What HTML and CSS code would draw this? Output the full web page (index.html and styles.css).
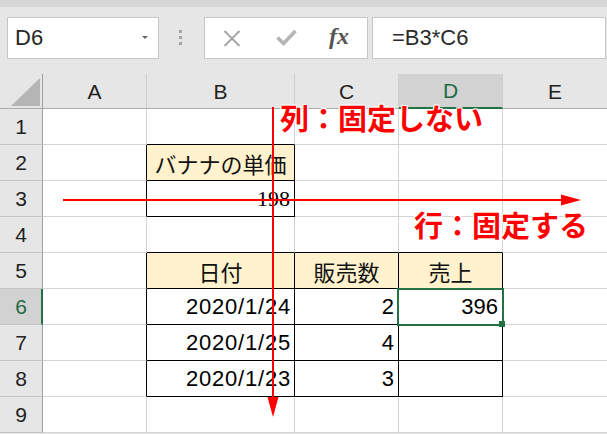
FILE: index.html
```html
<!DOCTYPE html>
<html lang="ja">
<head>
<meta charset="utf-8">
<title>Excel</title>
<link rel="stylesheet" href="styles.css">
</head>
<body>
<div class="app">
  <div class="topband"></div>
  <div class="toolbar">
    <div class="namebox"><span class="name">D6</span><span class="caret"></span></div>
    <div class="grip"><i></i><i></i><i></i></div>
    <div class="fbtns">
      <svg class="ico-x" width="18" height="17" viewBox="0 0 18 17"><path d="M1.5 1 L16.5 16 M16.5 1 L1.5 16" stroke="#a6a6a6" stroke-width="2" fill="none"/></svg>
      <svg class="ico-check" width="21" height="17" viewBox="0 0 21 17"><path d="M1.5 8.5 L7.5 14.5 L19.5 2" stroke="#b5b5b5" stroke-width="3.6" fill="none"/></svg>
      <span class="fx">fx</span>
    </div>
    <div class="formula">=B3*C6</div>
  </div>
  <div class="sheet">
    <div class="corner"><span class="tri"></span></div>
    <div class="ch">A</div>
    <div class="ch">B</div>
    <div class="ch">C</div>
    <div class="ch sel">D</div>
    <div class="ch">E</div>

    <div class="rh">1</div>
    <div class="c"></div>
    <div class="c tb"></div>
    <div class="c"></div>
    <div class="c"></div>
    <div class="c"></div>

    <div class="rh">2</div>
    <div class="c tr"></div>
    <div class="c t hd">バナナの単価</div>
    <div class="c"></div>
    <div class="c"></div>
    <div class="c"></div>

    <div class="rh">3</div>
    <div class="c tr"></div>
    <div class="c t num serif">198</div>
    <div class="c"></div>
    <div class="c"></div>
    <div class="c"></div>

    <div class="rh">4</div>
    <div class="c"></div>
    <div class="c tb"></div>
    <div class="c tb"></div>
    <div class="c tb"></div>
    <div class="c"></div>

    <div class="rh">5</div>
    <div class="c tr"></div>
    <div class="c t hd">日付</div>
    <div class="c t hd">販売数</div>
    <div class="c t hd">売上</div>
    <div class="c"></div>

    <div class="rh sel">6</div>
    <div class="c tr"></div>
    <div class="c t num date">2020/1/24</div>
    <div class="c t num">2</div>
    <div class="c t num active">396</div>
    <div class="c"></div>

    <div class="rh">7</div>
    <div class="c tr"></div>
    <div class="c t num date">2020/1/25</div>
    <div class="c t num">4</div>
    <div class="c t num"></div>
    <div class="c"></div>

    <div class="rh">8</div>
    <div class="c tr"></div>
    <div class="c t num date">2020/1/23</div>
    <div class="c t num">3</div>
    <div class="c t num"></div>
    <div class="c"></div>

    <div class="rh">9</div>
    <div class="c"></div>
    <div class="c"></div>
    <div class="c"></div>
    <div class="c"></div>
    <div class="c"></div>
  </div>

  <svg class="arrows" width="607" height="434" viewBox="0 0 607 434">
    <line x1="273" y1="107" x2="273" y2="400" stroke="#ff0000" stroke-width="2"/>
    <polygon points="267.5,397 278.5,397 273,417" fill="#ff0000"/>
    <line x1="63" y1="200" x2="564" y2="200" stroke="#ff0000" stroke-width="2"/>
    <polygon points="561,194.5 561,205.5 581,200" fill="#ff0000"/>
  </svg>
  <div class="note note-col">列：固定しない</div>
  <div class="note note-row">行：固定する</div>
</div>
</body>
</html>
```

FILE: styles.css
```css
* {
  box-sizing: border-box;
  margin: 0;
  padding: 0;
}

html,
body {
  width: 607px;
  height: 434px;
  overflow: hidden;
}

body {
  font-family: "Liberation Sans", "Noto Sans CJK JP", sans-serif;
  background: #e6e6e6;
  color: #000;
}

.app {
  position: relative;
  width: 607px;
  height: 434px;
  overflow: hidden;
}

.topband {
  height: 7px;
  background: #d6d6d6;
}

.toolbar {
  height: 67px;
  display: flex;
  align-items: flex-start;
  padding: 10px 0 0 7px;
  background: #e6e6e6;
}

.namebox {
  width: 152px;
  height: 42px;
  background: #fff;
  border: 1px solid #c6c6c6;
  display: flex;
  align-items: center;
  padding-left: 7px;
  padding-right: 10px;
}

.name {
  flex: 1;
  font-size: 22px;
  color: #262626;
}

.caret {
  width: 0;
  height: 0;
  border-left: 3px solid transparent;
  border-right: 3px solid transparent;
  border-top: 3px solid #666;
  margin-top: -2px;
}

.grip {
  display: flex;
  flex-direction: column;
  gap: 3px;
  margin: 13px 22px 0 20px;
}

.grip i {
  display: block;
  width: 3px;
  height: 3px;
  background: #a3a3a3;
}

.fbtns {
  width: 164px;
  height: 42px;
  background: #fff;
  border: 1px solid #c6c6c6;
  display: flex;
  align-items: center;
  padding-left: 18px;
}

.ico-x {
  display: block;
}

.ico-check {
  display: block;
  margin-left: 35px;
  margin-top: -1px;
}

.fx {
  margin-left: 32px;
  font-family: "Liberation Serif", serif;
  font-style: italic;
  font-weight: 700;
  font-size: 24px;
  color: #555;
  margin-top: -3px;
}

.formula {
  width: 234px;
  height: 42px;
  margin-left: 4px;
  background: #fff;
  border: 1px solid #c6c6c6;
  display: flex;
  align-items: center;
  padding-left: 19px;
  font-size: 22px;
  color: #2b2b2b;
}

.sheet {
  display: grid;
  grid-template-columns: 43px 104px 148px 104px 104px 105px;
  grid-template-rows: 35px repeat(9, 36px);
  background: #fff;
}

.corner {
  background: #e6e6e6;
  border-right: 1px solid #9e9e9e;
  border-bottom: 1px solid #ababab;
  display: flex;
  align-items: flex-end;
  justify-content: flex-end;
  padding: 0 2px 2px 0;
}

.tri {
  width: 0;
  height: 0;
  border-left: 29px solid transparent;
  border-bottom: 28px solid #b5b5b5;
}

.ch {
  background: #e6e6e6;
  border-right: 1px solid #cdcdcd;
  border-bottom: 1px solid #ababab;
  display: flex;
  align-items: center;
  justify-content: center;
  font-size: 21px;
  line-height: 1;
  color: #222;
}

.ch.sel {
  background: #d2d2d2;
  border-bottom: 2px solid #217346;
  color: #1f6b45;
}

.rh {
  background: #e6e6e6;
  border-right: 1px solid #9e9e9e;
  border-bottom: 1px solid #c4c4c4;
  display: flex;
  align-items: center;
  justify-content: center;
  font-size: 21px;
  color: #222;
}

.rh.sel {
  background: #d2d2d2;
  border-right: 2px solid #217346;
  color: #1f6b45;
  padding-left: 1px;
}

.c {
  background: #fff;
  border-right: 1px solid #d4d4d4;
  border-bottom: 1px solid #d4d4d4;
  display: flex;
  align-items: center;
  padding: 0 4px;
  font-size: 22px;
  line-height: 1;
  white-space: nowrap;
}

.t {
  border-right-color: #000;
  border-bottom-color: #000;
}

.tr {
  border-right-color: #000;
}

.tb {
  border-bottom-color: #000;
}

.hd {
  background: #fff2cc;
  justify-content: center;
  font-family: "Noto Sans CJK JP", sans-serif;
  font-size: 22px;
  color: #111;
}

.num {
  justify-content: flex-end;
}

.date {
  letter-spacing: 0.8px;
  padding-right: 3px;
}

.serif {
  font-family: "Liberation Serif", serif;
}

.active {
  position: relative;
}

.active::after {
  content: "";
  position: absolute;
  top: -1px;
  left: -2px;
  right: -2px;
  bottom: -2px;
  border: 2px solid #217346;
}

.active::before {
  content: "";
  position: absolute;
  right: -3px;
  bottom: -3px;
  width: 6px;
  height: 6px;
  background: #217346;
  z-index: 1;
}

.arrows {
  position: absolute;
  top: 0;
  left: 0;
  pointer-events: none;
}

.note {
  position: absolute;
  font-family: "Noto Sans CJK JP", sans-serif;
  font-weight: 700;
  font-size: 29px;
  line-height: 1;
  color: #ff0000;
  white-space: nowrap;
  text-shadow: 0 0 2px #fff, 1px 1px 0 #fff, -1px -1px 0 #fff, 1px -1px 0 #fff, -1px 1px 0 #fff;
}

.note-col {
  left: 280px;
  top: 103px;
}

.note-row {
  left: 414px;
  top: 210px;
}
```
